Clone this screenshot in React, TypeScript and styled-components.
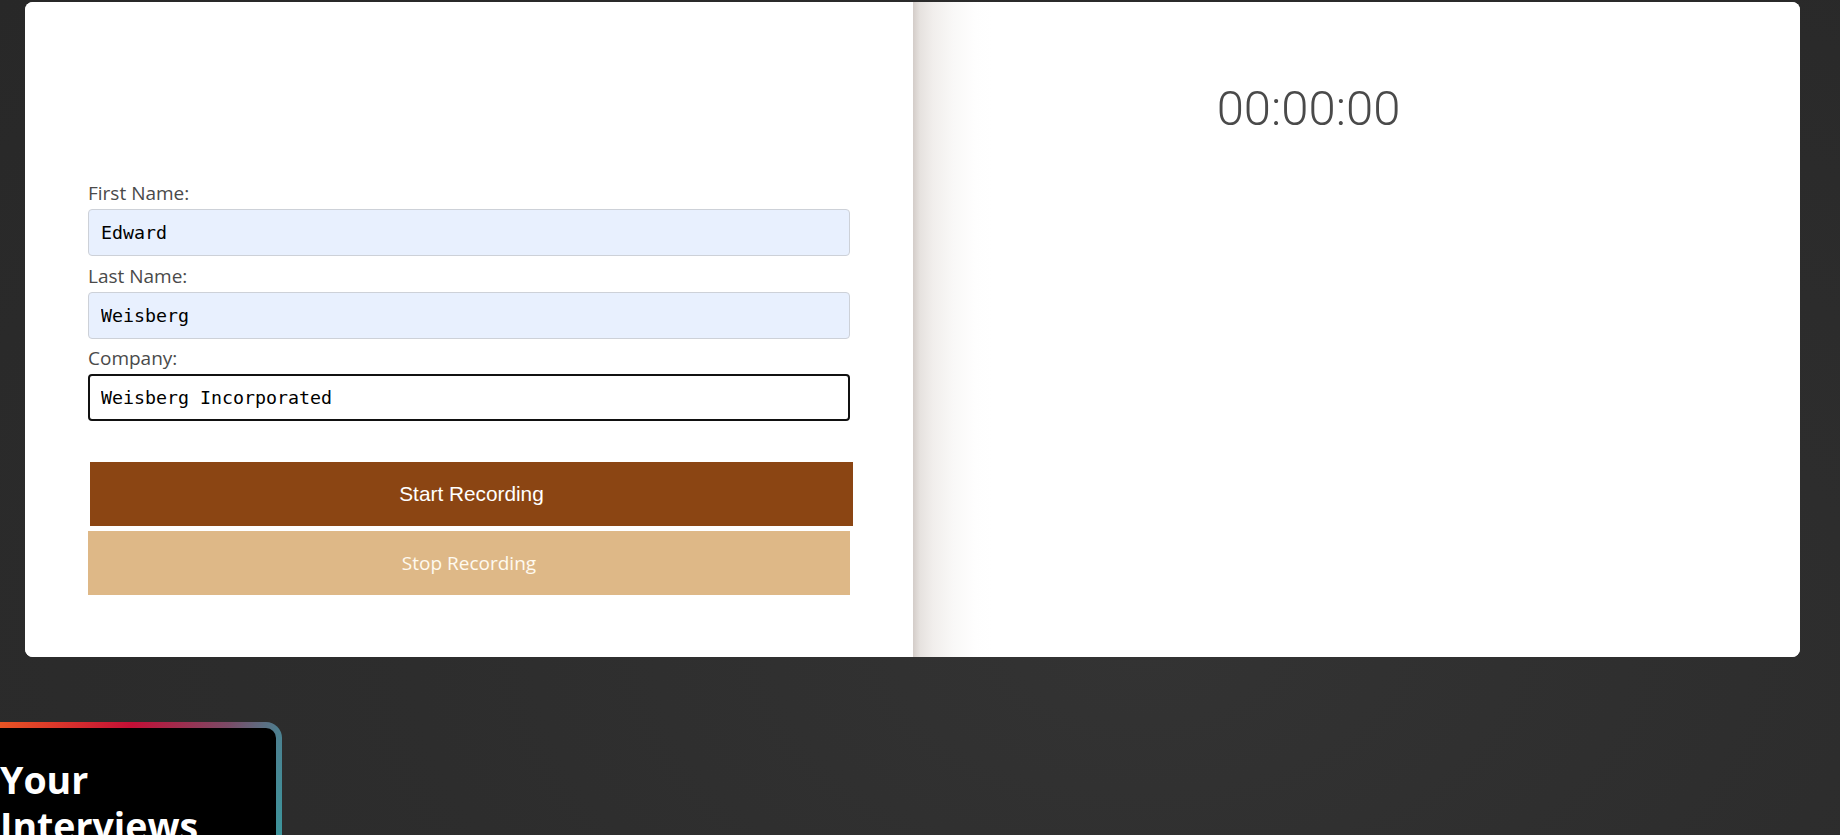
import React from "react";
import styled, { createGlobalStyle } from "styled-components";

const GlobalStyle = createGlobalStyle`
  html, body {
    margin: 0;
    padding: 0;
    height: 100%;
    overflow: hidden;
  }
  body {
    background: radial-gradient(ellipse at 62% 78%, #333333 0%, #2d2d2d 45%, #282828 100%);
    font-family: "Open Sans", "Noto Sans", sans-serif;
  }
  * { box-sizing: border-box; }
`;

const Page = styled.div`
  display: flex;
  flex-direction: column;
  gap: 65px;
  padding: 2px 40px 0 25px;
  min-height: 835px;
`;

const Card = styled.section`
  display: flex;
  width: 1775px;
  height: 655px;
  background: #ffffff;
  border-radius: 8px;
  overflow: hidden;
`;

const FormPanel = styled.form`
  width: 888px;
  flex-shrink: 0;
  display: flex;
  flex-direction: column;
  padding: 178px 63px 63px 63px;
  background: #ffffff;
`;

const Field = styled.div<{ $first?: boolean }>`
  display: flex;
  flex-direction: column;
  margin-top: ${(p) => (p.$first ? "0" : "6.5px")};
`;

const Label = styled.label`
  font-family: "Open Sans", "Noto Sans", sans-serif;
  font-size: 19px;
  line-height: 26px;
  color: #4a4a4a;
  margin-bottom: 3px;
`;

const Input = styled.input<{ $focused?: boolean; $autofill?: boolean }>`
  width: 762px;
  height: 47px;
  padding: 0 12px;
  font-family: "DejaVu Sans Mono", "Liberation Mono", monospace;
  font-size: 18.3px;
  color: #000000;
  background: ${(p) => (p.$autofill ? "#e8f0fe" : "#ffffff")};
  border: ${(p) => (p.$focused ? "2px solid #111111" : "1px solid #cdd1d8")};
  border-radius: 4px;
  outline: none;
  padding-left: ${(p) => (p.$focused ? "11px" : "12px")};
`;

const ButtonStack = styled.div`
  display: flex;
  flex-direction: column;
  gap: 5px;
  margin-top: 41px;
`;

const StartButton = styled.button`
  width: 763px;
  height: 64px;
  margin-left: 2px;
  border: none;
  background: #8b4513;
  color: #ffffff;
  font-family: "Liberation Sans", Arial, sans-serif;
  font-size: 20.8px;
  cursor: pointer;
`;

const StopButton = styled.button`
  width: 762px;
  height: 64px;
  border: none;
  background: #deb887;
  color: #fffaf0;
  font-family: "Open Sans", "Noto Sans", sans-serif;
  font-size: 19px;
  cursor: default;
`;

const TimerPanel = styled.div`
  flex: 1;
  display: flex;
  justify-content: center;
  align-items: flex-start;
  padding: 79px 96px 0 0;
  background: linear-gradient(
    to right,
    #d3ccc8 0px,
    #e6e2df 7px,
    #f1eeec 20px,
    #f9f8f7 40px,
    #fefefe 62px,
    #ffffff 80px
  );
`;

const Timer = styled.div`
  font-family: Roboto, "Open Sans", sans-serif;
  font-weight: 300;
  font-size: 49px;
  line-height: 56px;
  color: #4a4a4a;
`;

const InterviewsCard = styled.section`
  width: 322px;
  height: 170px;
  margin-left: -65px;
  padding: 6px;
  border-radius: 16px;
  background: linear-gradient(
    110deg,
    #f26a1f 0%,
    #dc3a2a 24%,
    #c30f36 45%,
    #7b4a66 70%,
    #4d8090 84%,
    #33a0a2 100%
  );
`;

const InterviewsInner = styled.div`
  height: 100%;
  background: #000000;
  border-radius: 10px;
  padding: 29px 0 0 34px;
`;

const InterviewsTitle = styled.h2`
  margin: 0;
  font-family: "Open Sans", "Noto Sans", sans-serif;
  font-weight: 700;
  font-size: 37.5px;
  line-height: 46px;
  color: #ffffff;
`;

export default function App() {
  return (
    <>
      <GlobalStyle />
      <Page>
        <Card>
          <FormPanel onSubmit={(e) => e.preventDefault()}>
            <Field $first>
              <Label htmlFor="first">First Name:</Label>
              <Input id="first" $autofill defaultValue="Edward" />
            </Field>
            <Field>
              <Label htmlFor="last">Last Name:</Label>
              <Input id="last" $autofill defaultValue="Weisberg" />
            </Field>
            <Field>
              <Label htmlFor="company">Company:</Label>
              <Input id="company" $focused defaultValue="Weisberg Incorporated" />
            </Field>
            <ButtonStack>
              <StartButton type="button">Start Recording</StartButton>
              <StopButton type="button">Stop Recording</StopButton>
            </ButtonStack>
          </FormPanel>
          <TimerPanel>
            <Timer>00:00:00</Timer>
          </TimerPanel>
        </Card>
        <InterviewsCard>
          <InterviewsInner>
            <InterviewsTitle>
              Your
              <br />
              Interviews
            </InterviewsTitle>
          </InterviewsInner>
        </InterviewsCard>
      </Page>
    </>
  );
}
